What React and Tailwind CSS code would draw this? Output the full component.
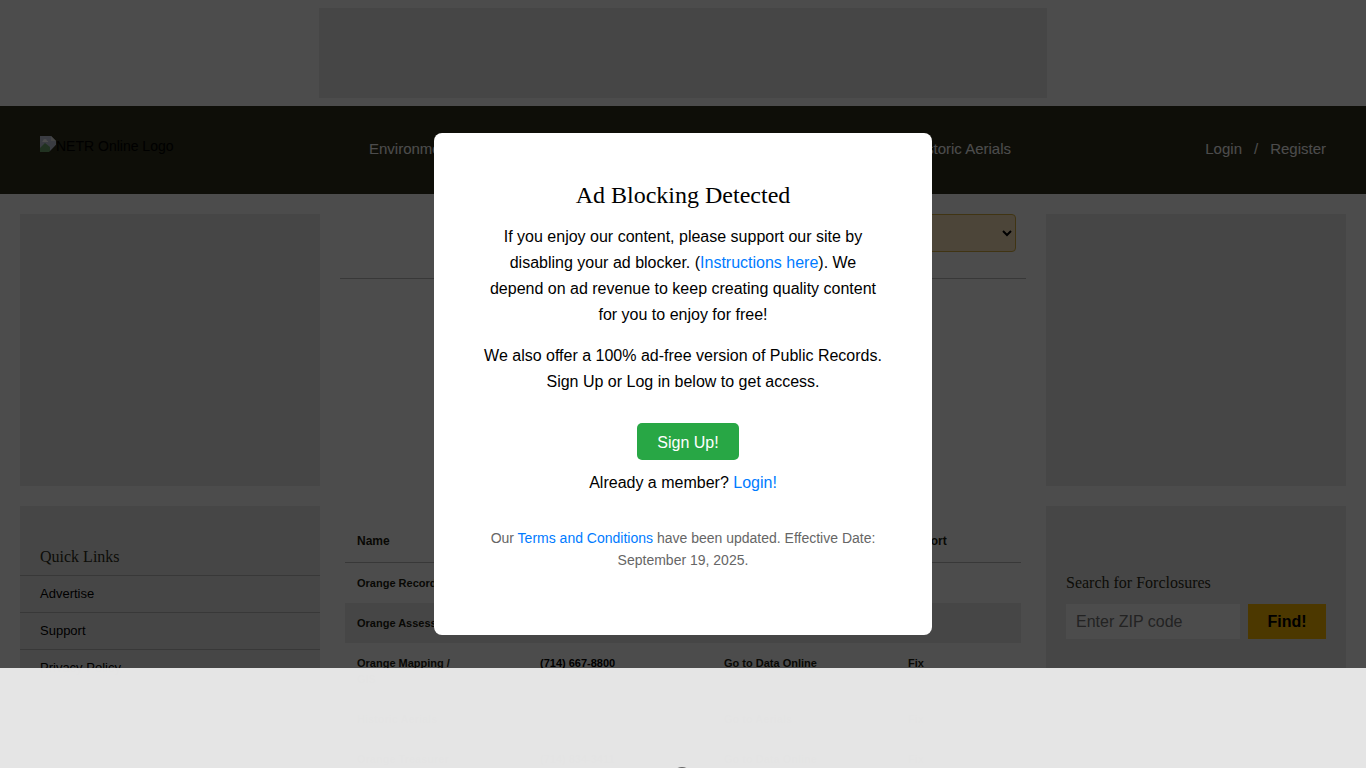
import React from "react";

const rows = [
  { name: "Orange Recorder", phone: "", online: "", report: "" },
  { name: "Orange Assessor", phone: "", online: "", report: "" },
  { name: "Orange Mapping / GIS", phone: "(714) 667-8800", online: "Go to Data Online", report: "Fix" },
  { name: "Historic Aerials", phone: "", online: "Go to Aerials", report: "Fix" },
  { name: "Orange Treasurer", phone: "(714) 834-3411", online: "Go to Data Online", report: "Fix" },
];

function BrokenImage() {
  return (
    <svg className="size-4 shrink-0" viewBox="0 0 16 16" aria-hidden="true">
      <path d="M0 0h11l5 5v4l-6 7H0z" fill="#c3c9dc" />
      <path d="M0 12l5-5 5 4v5H0z" fill="#6fa86f" />
      <path d="M3 5a2 2 0 0 1 4 0h1v1H2z" fill="#fff" />
      <path d="M11 0l5 5h-5z" fill="#e8e8e8" />
      <path d="M16 9l-7 7h7z" fill="#2f2f1b" />
    </svg>
  );
}

function Header() {
  return (
    <header className="flex h-22 items-center justify-between bg-[#2f2f1b] px-10 pb-0.5 text-[15px] text-white">
      <a href="#home" className="flex w-[218px] items-start pb-1.5 text-sm text-black">
        <BrokenImage />
        NETR Online Logo
      </a>
      <nav className="flex w-[642px] justify-between">
        <a href="#environmental">Environmental</a>
        <a href="#aerials">Historic Aerials</a>
      </nav>
      <div className="flex w-[204px] justify-end gap-3">
        <a href="#login">Login</a>
        <span>/</span>
        <a href="#register">Register</a>
      </div>
    </header>
  );
}

function LeftSidebar() {
  return (
    <aside className="flex w-[300px] shrink-0 flex-col gap-5">
      <div className="h-[272px] bg-[#ebebeb]" />
      <section className="bg-[#ebebeb] pt-[41px]">
        <h2 className="px-5 pb-2 font-['Liberation_Serif',serif] text-base leading-5 text-[#2f2f1b]">Quick Links</h2>
        <ul className="text-[13px] leading-9">
          {["Advertise", "Support", "Privacy Policy"].map((label) => (
            <li key={label} className="border-t border-[#bbb] px-5">
              <a href="#link">{label}</a>
            </li>
          ))}
        </ul>
      </section>
    </aside>
  );
}

function Records() {
  return (
    <main className="min-w-0 flex-1">
      <div className="flex justify-end border-b border-[#bbb] px-2.5 pb-[26px]">
        <select
          aria-label="County"
          className="h-[38px] w-1/2 rounded border border-[#d5b040] bg-[#ffe8c0] px-2 text-sm"
        >
          <option></option>
        </select>
      </div>
      <div className="h-[240px]" />
      <div className="px-[5px]">
        <table className="w-full table-fixed text-left text-[11px] leading-4 font-bold text-[#1c1c10]">
          <thead className="text-xs">
            <tr className="border-b border-[#bbb]">
              <th className="w-[183px] px-3 pt-3.5 pb-[13px]">Name</th>
              <th className="w-[184px] px-3 pt-3.5 pb-[13px]"></th>
              <th className="w-[184px] px-3 pt-3.5 pb-[13px]"></th>
              <th className="px-3 pt-3.5 pb-[13px]">Report</th>
            </tr>
          </thead>
          <tbody>
            {rows.map((row) => (
              <tr key={row.name} className="align-top even:bg-[#ebebeb]">
                <td className="py-3 pr-20 pl-3 whitespace-nowrap">
                  {row.name.split("/ ").map((part, i, all) => (
                    <span key={part} className="block">
                      {i < all.length - 1 ? part + "/" : part}
                    </span>
                  ))}
                </td>
                <td className="p-3 text-black">{row.phone}</td>
                <td className="p-3">{row.online && <a href="#data">{row.online}</a>}</td>
                <td className="p-3">{row.report && <a href="#fix">{row.report}</a>}</td>
              </tr>
            ))}
          </tbody>
        </table>
      </div>
    </main>
  );
}

function RightSidebar() {
  return (
    <aside className="flex w-[300px] shrink-0 flex-col gap-5">
      <div className="h-[272px] bg-[#ebebeb]" />
      <section className="h-[300px] bg-[#ebebeb] px-5 pt-[67px]">
        <h2 className="pb-[11px] font-['Liberation_Serif',serif] text-base leading-5 text-[#2f2f1b]">Search for Forclosures</h2>
        <form className="flex gap-2" onSubmit={(e) => e.preventDefault()}>
          <input
            aria-label="ZIP code"
            placeholder="Enter ZIP code"
            className="h-[35px] min-w-0 flex-1 bg-white px-2.5 text-base placeholder:text-[#757575]"
          />
          <button className="h-[35px] w-[78px] bg-[#ffbb00] text-base font-bold">Find!</button>
        </form>
      </section>
    </aside>
  );
}

function AdBlockDialog() {
  return (
    <div className="fixed inset-0 flex items-center justify-center bg-black/70">
      <div role="dialog" aria-labelledby="dialog-title" className="w-[498px] rounded-lg bg-white px-12 pt-12 pb-16 text-center text-base leading-[26px]">
        <h1 id="dialog-title" className="mb-[15px] font-['Liberation_Serif',serif] text-2xl leading-7">Ad Blocking Detected</h1>
        <p className="mb-[15px]">
          If you enjoy our content, please support our site by disabling your ad blocker. (
          <a href="#instructions" className="text-[#007bff]">Instructions here</a>). We depend on ad revenue to keep
          creating quality content for you to enjoy for free!
        </p>
        <p className="mb-7">We also offer a 100% ad-free version of Public Records. Sign Up or Log in below to get access.</p>
        <button className="ml-2.5 h-[37px] rounded-[5px] bg-[#28a745] px-5 pt-0.5 text-white">Sign Up!</button>
        <p className="mt-2.5">
          Already a member? <a href="#login" className="text-[#007bff]">Login!</a>
        </p>
        <p className="mt-[31px] text-sm leading-[22px] text-[#666]">
          Our <a href="#terms" className="text-[#007bff]">Terms and Conditions</a> have been updated. Effective Date:
          September 19, 2025.
        </p>
      </div>
    </div>
  );
}

export default function App() {
  return (
    <div className="h-screen overflow-hidden bg-white font-['Liberation_Sans',Arial,sans-serif] text-black">
      <div className="flex h-[106px] justify-center pt-2">
        <div className="h-[90px] w-[728px] bg-[#ebebeb]" />
      </div>
      <Header />
      <div className="flex gap-5 px-5 pt-5">
        <LeftSidebar />
        <Records />
        <RightSidebar />
      </div>
      <AdBlockDialog />
      <div className="fixed inset-x-0 bottom-0 flex h-[100px] items-end justify-center overflow-hidden bg-[#e9e9e9]/98">
        <svg className="h-px w-4" viewBox="0 0 16 1" aria-hidden="true">
          <circle cx="7" cy="10" r="10" fill="#666" />
        </svg>
      </div>
    </div>
  );
}
